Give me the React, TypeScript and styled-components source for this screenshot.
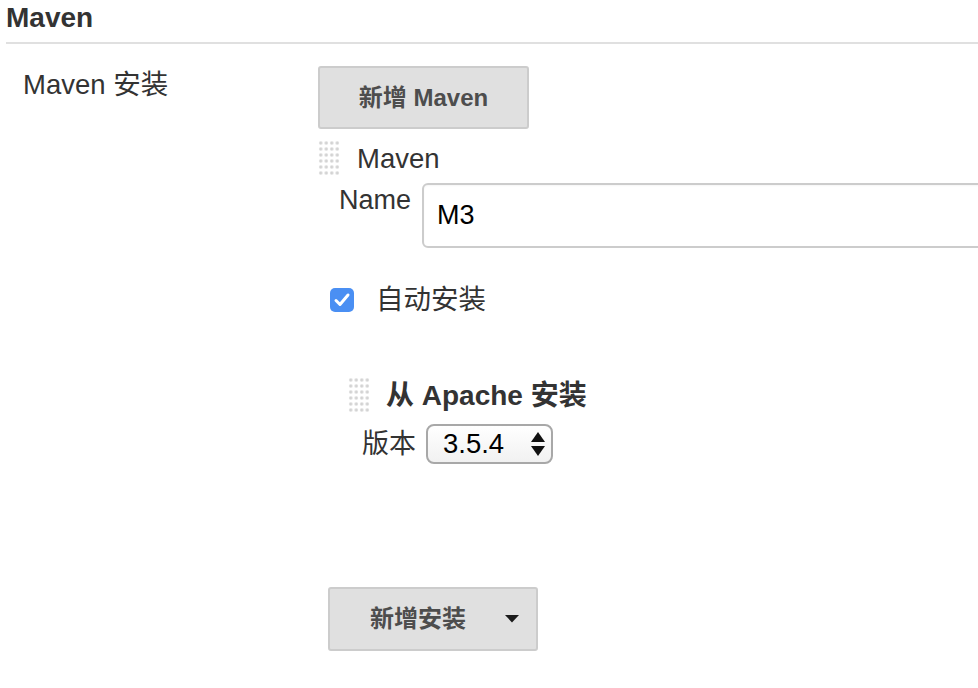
import React from "react";
import styled, { createGlobalStyle } from "styled-components";

const GlobalStyle = createGlobalStyle`
  html, body {
    margin: 0;
    padding: 0;
    background: #ffffff;
    overflow: hidden;
  }
  body {
    font-family: "Liberation Sans", "Noto Sans CJK SC", Arial, sans-serif;
    color: #333333;
    font-size: 27px;
  }
`;

const Page = styled.div`
  width: 978px;
  height: 688px;
  overflow: hidden;
`;

const SectionHeader = styled.div`
  margin-left: 6px;
  padding-top: 2px;
  padding-bottom: 9px;
  line-height: 31px;
  font-size: 28px;
  font-weight: bold;
  color: #333333;
  border-bottom: 2px solid #e0e0e0;
`;

const SettingRow = styled.div`
  display: flex;
  align-items: flex-start;
  margin-top: 22px;
`;

const SettingLabel = styled.div`
  box-sizing: border-box;
  width: 318px;
  flex: none;
  padding-left: 23px;
  padding-top: 3px;
  line-height: 31px;
  font-size: 27.5px;
  color: #333333;
`;

const SettingBody = styled.div`
  display: flex;
  flex-direction: column;
  align-items: flex-start;
  flex: 1;
  min-width: 0;
`;

const PlainButton = styled.div`
  box-sizing: border-box;
  display: flex;
  align-items: center;
  justify-content: center;
  width: 211px;
  height: 63px;
  background: #e0e0e0;
  border: 2px solid #cccccc;
  border-radius: 3px;
  font-size: 24px;
  font-weight: bold;
  color: #4d4d4d;
  line-height: 28px;
`;

const Chunk = styled.div`
  display: flex;
  flex-direction: column;
  align-items: flex-start;
  align-self: stretch;
`;

const ChunkHeader = styled.div<{ $top: number; $gap: number }>`
  display: flex;
  align-items: center;
  gap: ${(p) => p.$gap}px;
  height: 36px;
  margin-top: ${(p) => p.$top}px;
`;

const Grip = styled.div`
  width: 22px;
  height: 36px;
  flex: none;
  background-image: radial-gradient(
    circle at center,
    #cfcfcf 0,
    #d6d6d6 1.1px,
    rgba(255, 255, 255, 0) 2.3px
  );
  background-size: 5.5px 6px;
`;

const ChunkTitle = styled.div<{ $bold?: boolean }>`
  font-size: ${(p) => (p.$bold ? 28 : 27.5)}px;
  line-height: 31px;
  font-weight: ${(p) => (p.$bold ? "bold" : "normal")};
  color: #333333;
  white-space: nowrap;
`;

const FieldRow = styled.div<{ $top: number; $align: string }>`
  display: flex;
  align-items: ${(p) => p.$align};
  margin-top: ${(p) => p.$top}px;
  align-self: stretch;
`;

const FieldLabel = styled.div<{ $left: number; $right: number; $pt: number }>`
  flex: none;
  padding-left: ${(p) => p.$left}px;
  margin-right: ${(p) => p.$right}px;
  padding-top: ${(p) => p.$pt}px;
  font-size: 27px;
  line-height: 31px;
  color: #333333;
  white-space: nowrap;
`;

const TextInput = styled.div`
  box-sizing: border-box;
  width: 620px;
  flex: none;
  height: 65px;
  border: 2px solid #cccccc;
  border-radius: 6px;
  background: #ffffff;
  padding-left: 13px;
  display: flex;
  align-items: center;
  font-size: 27px;
  color: #000000;
  box-shadow: inset 0 1px 2px rgba(0, 0, 0, 0.04);
`;

const CheckRow = styled.div`
  display: flex;
  align-items: center;
  gap: 22px;
  margin-top: 39px;
  padding-left: 12px;
  height: 25px;
`;

const CheckBox = styled.div`
  box-sizing: border-box;
  width: 24px;
  height: 24px;
  border-radius: 5px;
  background: #4a8ff3;
  display: flex;
  align-items: center;
  justify-content: center;
`;

const CheckLabel = styled.div`
  font-size: 27.5px;
  line-height: 31px;
  color: #333333;
`;

const Nested = styled.div`
  display: flex;
  flex-direction: column;
  align-items: flex-start;
  margin-left: 30px;
  margin-top: 65px;
  align-self: stretch;
`;

const SelectBox = styled.div`
  box-sizing: border-box;
  width: 127px;
  height: 40px;
  border: 2px solid #a8a8a8;
  border-radius: 8px;
  background: linear-gradient(#ffffff, #f1f1f1);
  display: flex;
  align-items: center;
  justify-content: space-between;
  padding-left: 15px;
  padding-right: 5px;
  font-size: 27.5px;
  color: #000000;
`;

const DropButton = styled.div`
  box-sizing: border-box;
  display: flex;
  align-items: center;
  gap: 39px;
  width: 210px;
  height: 64px;
  margin-top: 123px;
  margin-left: 10px;
  padding-left: 40px;
  background: #e0e0e0;
  border: 2px solid #cccccc;
  border-radius: 3px;
  font-size: 24px;
  font-weight: bold;
  color: #4d4d4d;
  line-height: 28px;
`;

const CheckIcon = () => (
  <svg width="18" height="16" viewBox="0 0 18 16">
    <path
      d="M3 8.5 L7 12.5 L15 3"
      fill="none"
      stroke="#ffffff"
      strokeWidth="3"
      strokeLinecap="round"
      strokeLinejoin="round"
    />
  </svg>
);

const UpDownArrows = () => (
  <svg width="16" height="28" viewBox="0 0 16 28">
    <path d="M8 2 L15 12 L1 12 Z" fill="#111111" />
    <path d="M1 16 L15 16 L8 26 Z" fill="#111111" />
  </svg>
);

const Caret = () => (
  <svg width="14" height="8" viewBox="0 0 14 8">
    <path d="M0 0 L14 0 L7 7.5 Z" fill="#1a1a1a" />
  </svg>
);

export default function App() {
  return (
    <Page>
      <GlobalStyle />
      <SectionHeader>Maven</SectionHeader>
      <SettingRow>
        <SettingLabel>Maven 安装</SettingLabel>
        <SettingBody>
          <PlainButton>新增 Maven</PlainButton>
          <Chunk>
            <ChunkHeader $top={11} $gap={17}>
              <Grip />
              <ChunkTitle>Maven</ChunkTitle>
            </ChunkHeader>
            <FieldRow $top={7} $align="flex-start">
              <FieldLabel $left={21} $right={11} $pt={2}>
                Name
              </FieldLabel>
              <TextInput>M3</TextInput>
            </FieldRow>
            <CheckRow>
              <CheckBox>
                <CheckIcon />
              </CheckBox>
              <CheckLabel>自动安装</CheckLabel>
            </CheckRow>
            <Nested>
              <ChunkHeader $top={0} $gap={16}>
                <Grip />
                <ChunkTitle $bold>从 Apache 安装</ChunkTitle>
              </ChunkHeader>
              <FieldRow $top={11} $align="center">
                <FieldLabel $left={14} $right={10} $pt={0}>
                  版本
                </FieldLabel>
                <SelectBox>
                  <span>3.5.4</span>
                  <UpDownArrows />
                </SelectBox>
              </FieldRow>
            </Nested>
          </Chunk>
          <DropButton>
            <span>新增安装</span>
            <Caret />
          </DropButton>
        </SettingBody>
      </SettingRow>
    </Page>
  );
}
